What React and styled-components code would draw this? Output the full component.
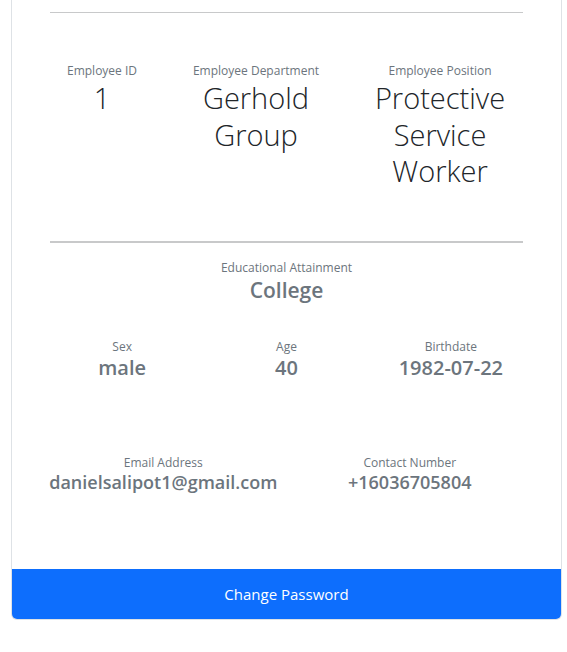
import React from "react";
import styled, { createGlobalStyle } from "styled-components";

const GlobalStyle = createGlobalStyle`
  body {
    margin: 0;
    background: #fff;
    font-family: "Open Sans", "Noto Sans", sans-serif;
    color: #212529;
  }
`;

const profile = {
  top: [
    { label: "Employee ID", value: "1" },
    { label: "Employee Department", value: "Gerhold Group" },
    { label: "Employee Position", value: "Protective Service Worker" },
  ],
  personal: [
    { label: "Sex", value: "male" },
    { label: "Age", value: "40" },
    { label: "Birthdate", value: "1982-07-22" },
  ],
  contact: [
    { label: "Email Address", value: "danielsalipot1@gmail.com" },
    { label: "Contact Number", value: "+16036705804" },
  ],
};

const Profile = () => {
  return (
    <Wrapper>
      <GlobalStyle />
      <Card>
        <CardBody>
          <Rule />
          <TopRow>
            {profile.top.map((item) => (
              <Field key={item.label}>
                <Label>{item.label}</Label>
                <BigValue>{item.value}</BigValue>
              </Field>
            ))}
          </TopRow>
          <Rule $thick />
          <Field className="edu">
            <Label>Educational Attainment</Label>
            <Value $size="21px" $lh="26.5px">College</Value>
          </Field>
          <InfoRow $cols={3} $gap="33px">
            {profile.personal.map((item) => (
              <Field key={item.label}>
                <Label>{item.label}</Label>
                <Value $size="20px">{item.value}</Value>
              </Field>
            ))}
          </InfoRow>
          <InfoRow $cols={2} $gap="73px">
            {profile.contact.map((item) => (
              <Field key={item.label}>
                <Label>{item.label}</Label>
                <Value $size="18px" $lh="21.6px">{item.value}</Value>
              </Field>
            ))}
          </InfoRow>
        </CardBody>
        <FooterButton>Change Password</FooterButton>
      </Card>
    </Wrapper>
  );
};

export default Profile;

const Wrapper = styled.div`
  padding-left: 11px;
  width: 551px;
`;

const Card = styled.section`
  border: 1px solid #dee2e6;
  border-top: none;
  border-radius: 0 0 6px 6px;
  overflow: hidden;
  background: #fff;
`;

const CardBody = styled.div`
  padding: 12px 28px 75px;
  .edu {
    margin-top: 15px;
  }
`;

const Rule = styled.hr`
  margin: 0 10px;
  border: 0;
  border-top: ${(p) => (p.$thick ? "2px" : "1px")} solid #c8c9ca;
`;

const TopRow = styled.div`
  display: grid;
  grid-template-columns: 104px 204px 164px;
  padding: 0 10px;
  margin: 48px 0 51px;
  align-items: start;
`;

const Field = styled.div`
  display: flex;
  flex-direction: column;
  align-items: center;
  text-align: center;
`;

const Label = styled.div`
  font-size: 12px;
  line-height: 19.2px;
  color: #6c757d;
`;

const BigValue = styled.div`
  max-width: 132px;
  font-size: 29px;
  font-weight: 300;
  line-height: 36.6px;
  color: #212529;
`;

const Value = styled.div`
  font-size: ${(p) => p.$size};
  font-weight: 600;
  line-height: ${(p) => p.$lh || "24px"};
  color: #6c757d;
  white-space: nowrap;
`;

const InfoRow = styled.div`
  display: grid;
  grid-template-columns: repeat(${(p) => p.$cols}, 1fr);
  margin-top: ${(p) => p.$gap};
`;

const FooterButton = styled.button`
  display: block;
  width: 100%;
  height: 50px;
  border: none;
  background: #0d6efd;
  color: #fff;
  font-family: inherit;
  font-size: 15px;
  cursor: pointer;
`;
